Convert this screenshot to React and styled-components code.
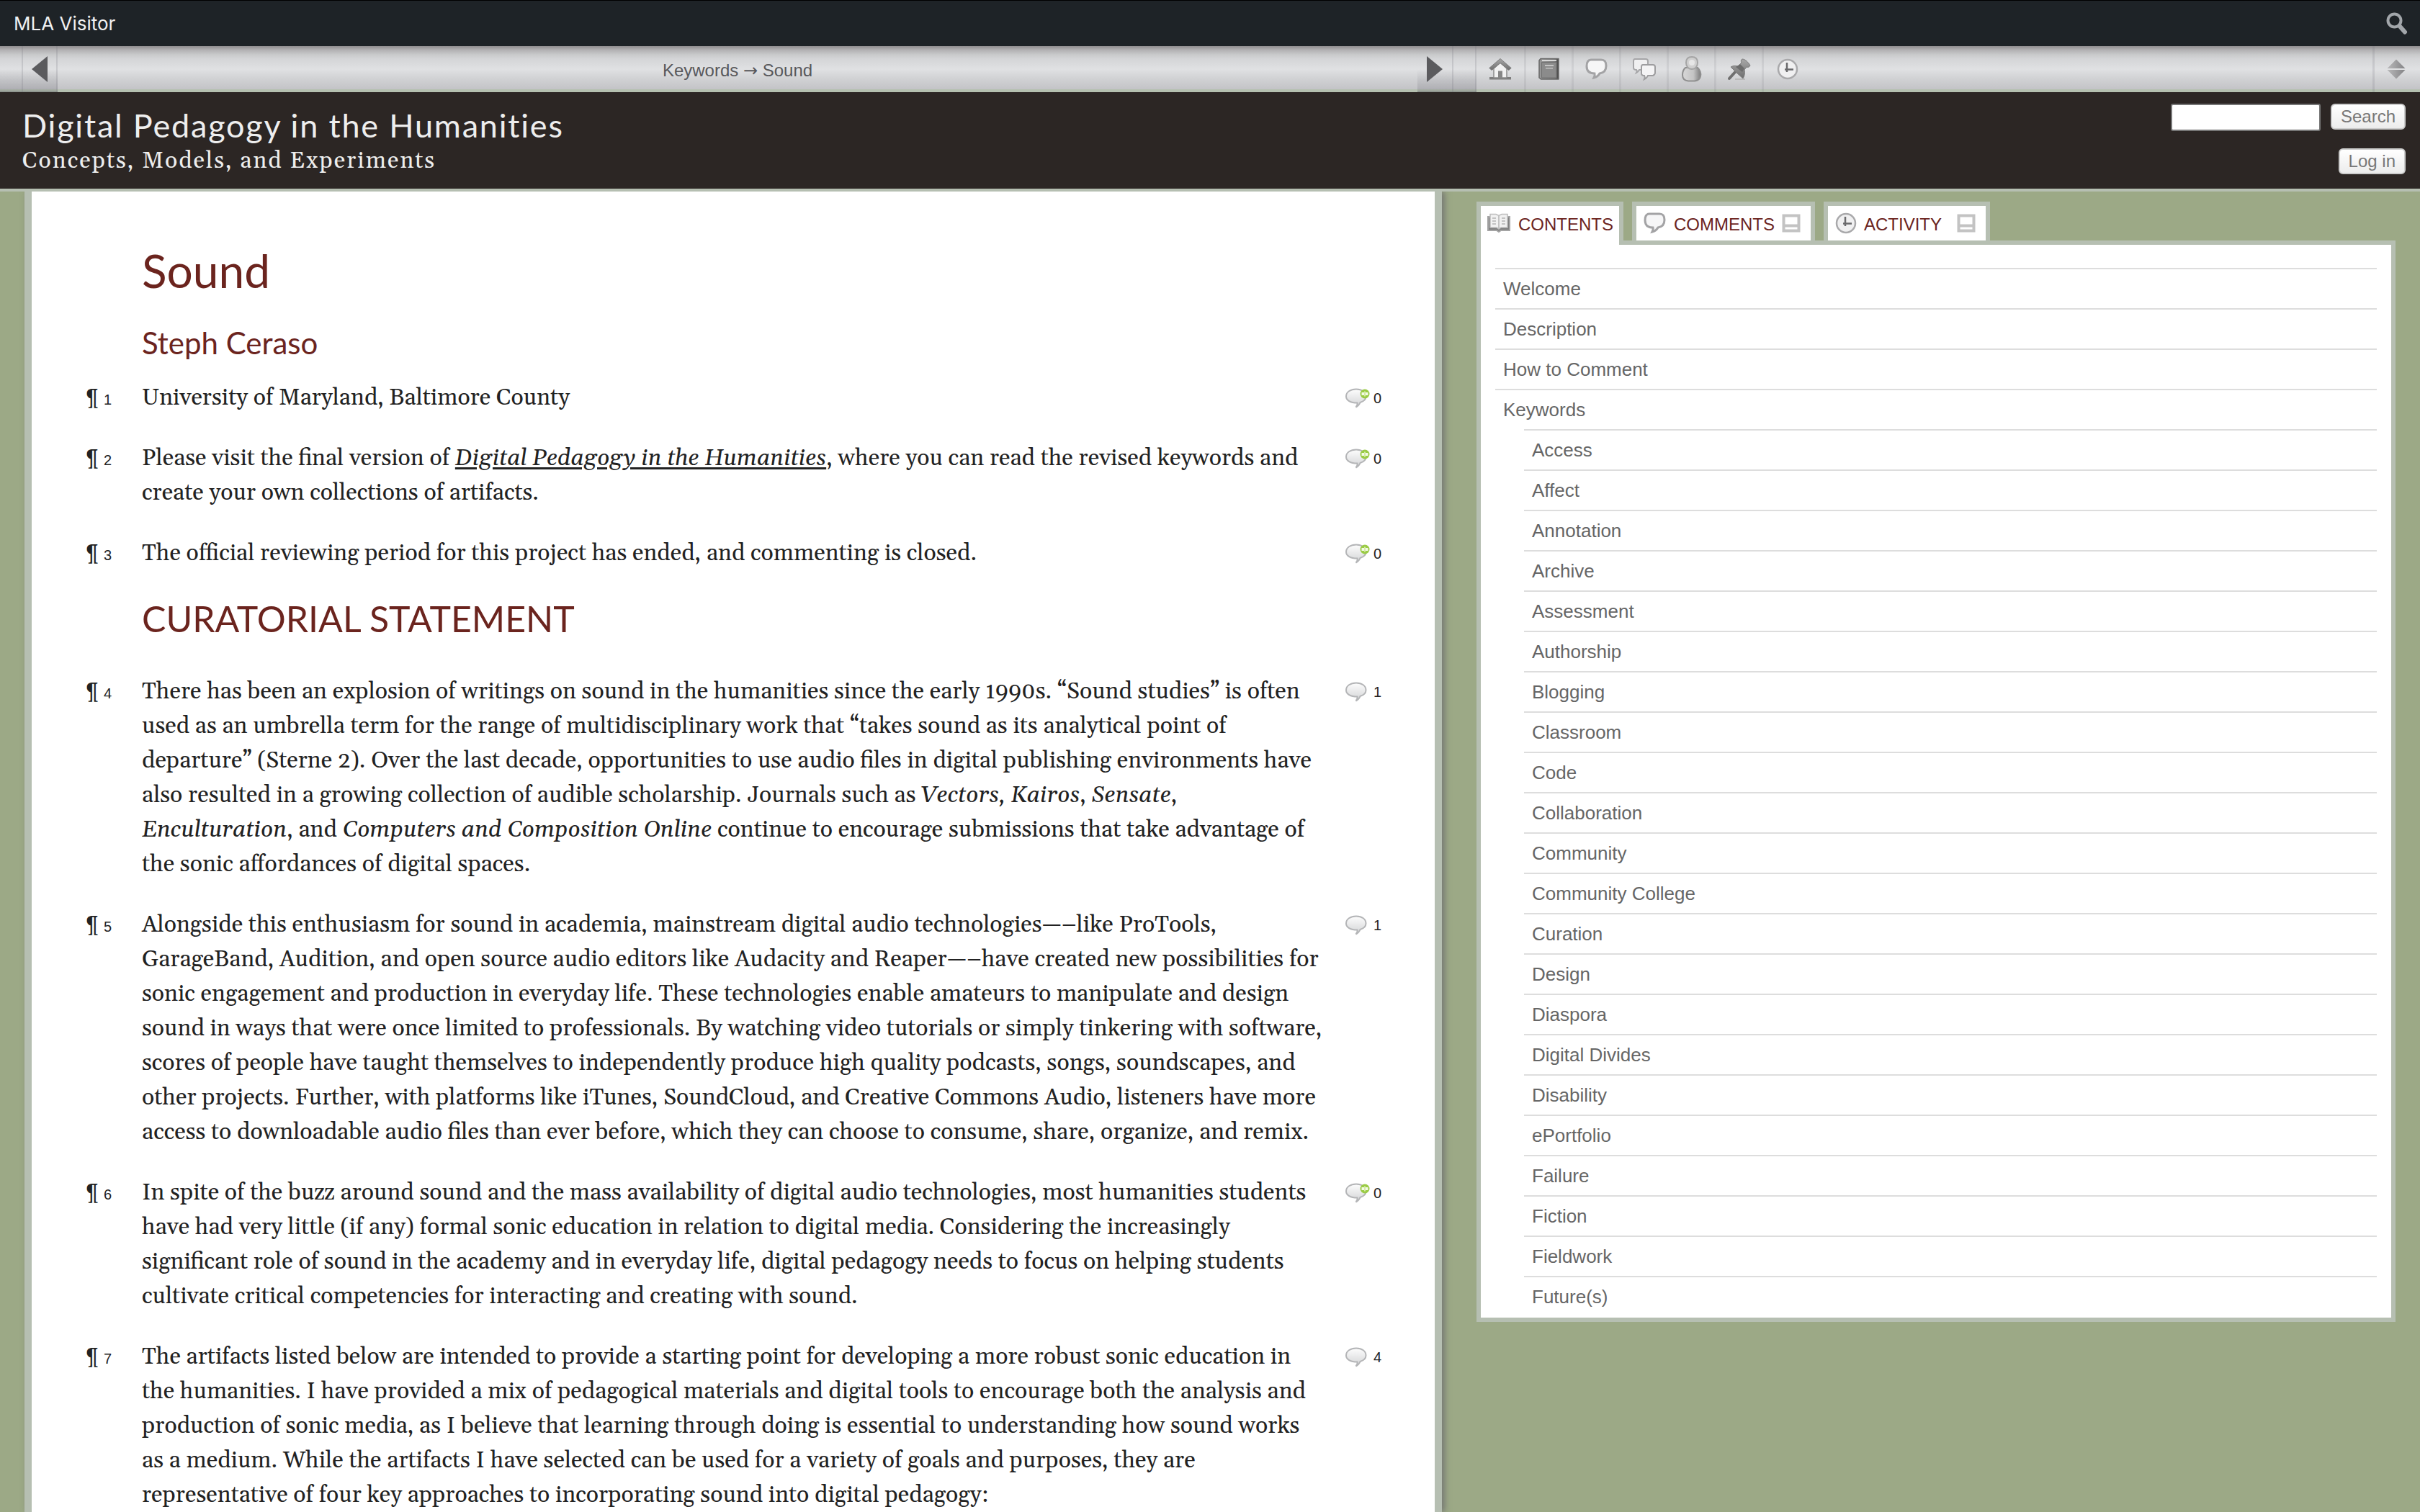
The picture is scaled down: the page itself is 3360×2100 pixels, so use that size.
import React from "react";
import styled, { createGlobalStyle, css } from "styled-components";

const sans = '"Liberation Sans", Helvetica, Arial, sans-serif';
const serif = 'Gelasio, Georgia, "Liberation Serif", serif';
const heading = 'Lato, "Open Sans", sans-serif';
const sage = "#b6bfb2";
const maroon = "#6b241e";

const GlobalStyle = createGlobalStyle`
  *, *::before, *::after { box-sizing: border-box; }
  body { margin: 0; background: #9ca986; font-family: ${sans}; color: #222; }
  button, input { font: inherit; }
  a { color: inherit; text-decoration: none; }
`;

const barGradient = css`
  background: linear-gradient(to bottom, #8f8d8f 0, #b0afb1 5px, #c9cacb 12px, #d4d5d7 18px, #e0e1e3 32px, #d2d3d5 44px, #c3c3c7 100%);
`;

const Shell = styled.div`
  display: flex;
  flex-direction: column;
  height: 100vh;
  overflow: hidden;
`;

const AdminBar = styled.div`
  display: flex;
  align-items: center;
  justify-content: space-between;
  height: 64px;
  flex: none;
  padding: 0 17px 0 19px;
  background: #1e2327;
  border-top: 1px solid #000;
  color: #f0f0f1;
  font: 26px/32px Inter, Roboto, sans-serif;
`;

const PlainButton = styled.button`
  display: flex;
  padding: 0;
  border: 0;
  background: none;
  color: inherit;
  cursor: pointer;
`;

const Toolbar = styled.nav`
  display: grid;
  grid-template-columns: minmax(0, 1fr) 1310px;
  height: 64px;
  flex: none;
  border-bottom: 4px solid #b5c0b0;
  ${barGradient}
`;

const Pager = styled.div`
  display: flex;
  align-items: stretch;
`;

const PagerCell = styled.span`
  display: flex;
  align-items: center;
  justify-content: center;
  width: ${(p) => p.$width}px;
  border-right: 2px solid rgba(120, 120, 128, 0.22);
  background: linear-gradient(to bottom, transparent 50%, rgba(110, 110, 118, 0.25) 96%, rgba(90, 90, 98, 0.5) 100%);
`;

const Crumb = styled.p`
  flex: 1;
  margin: 0;
  padding-top: 4px;
  text-align: center;
  color: #58585b;
  font-size: 24px;
  line-height: 60px;
`;

const Arrow = styled.span`
  font-family: "DejaVu Sans", sans-serif;
`;

const ToolRow = styled.div`
  display: flex;
`;

const ToolLink = styled.a`
  display: flex;
  align-items: center;
  justify-content: center;
  width: 66px;
  border-right: 3px solid rgba(120, 120, 128, 0.14);
  &:first-child { width: 69px; }
  &:nth-child(7) { border-right: 0; }
`;

const Minimize = styled(PlainButton)`
  align-items: center;
  justify-content: center;
  width: 66px;
  margin-left: auto;
  padding-right: 3px;
  border-left: 3px solid rgba(120, 120, 128, 0.2);
`;

const Masthead = styled.header`
  display: flex;
  justify-content: space-between;
  height: 138px;
  flex: none;
  padding: 16px 20px 0 31px;
  background: #2c2624;
  border-bottom: 4px solid ${sage};
  color: #eee;
`;

const SiteTitle = styled.h1`
  margin: 0;
  padding-top: 4px;
  font: 400 45px/52px ${heading};
  letter-spacing: 0.04em;
`;

const Tagline = styled.p`
  margin: 0;
  font: 32px/48px ${serif};
  letter-spacing: 2px;
`;

const Tools = styled.div`
  display: flex;
  flex-direction: column;
  align-items: flex-end;
  gap: 24px;
`;

const SearchForm = styled.form`
  display: flex;
  align-items: flex-start;
  gap: 14px;
`;

const SearchInput = styled.input`
  width: 208px;
  height: 38px;
  padding: 2px 6px;
  border: 2px solid #767676;
  border-radius: 3px;
  background: #fff;
  font-size: 24px;
`;

const SmallButton = styled.button`
  height: 36px;
  padding: 0 12px;
  border: 2px solid #ccc;
  border-radius: 6px;
  background: linear-gradient(#fff, #ececec);
  color: #777;
  font-size: 24px;
  line-height: 32px;
  cursor: pointer;
`;

const Columns = styled.div`
  display: grid;
  grid-template-columns: minmax(0, 1fr) 1358px;
  flex: 1;
  min-height: 0;
`;

const Article = styled.main`
  margin-left: 34px;
  padding: 72px 70px 0 76px;
  border: solid ${sage};
  border-width: 0 10px;
  background: #fff;
  box-shadow: 4px 0 8px rgba(112, 112, 112, 0.85);
  clip-path: inset(0 -20px 0 -20px);
  overflow: hidden;
`;

const PageTitle = styled.h2`
  margin: 0 0 36px 77px;
  color: ${maroon};
  font: 400 64px/76px ${heading};
`;

const Byline = styled.h3`
  margin: 0 0 27px 77px;
  color: ${maroon};
  font: 400 42px/52px ${heading};
`;

const SectionTitle = styled.h3`
  margin: 0 0 48px 77px;
  color: ${maroon};
  font: 400 50px/60px ${heading};
`;

const ParaRow = styled.section`
  display: grid;
  grid-template-columns: 77px minmax(0, 1fr) 54px;
  margin-bottom: 36px;
`;

const ParaMark = styled.a`
  display: flex;
  align-items: baseline;
  gap: 8px;
  height: 48px;
  font: 32px/48px ${serif};
`;

const Small = styled.span`
  font: 20px/48px ${sans};
`;

const Para = styled.p`
  margin: 0;
  padding-right: 28px;
  font: 32px/48px ${serif};
  a { text-decoration: underline; text-decoration-thickness: 3px; text-underline-offset: 3px; }
`;

const CommentLink = styled.a`
  display: flex;
  align-items: center;
  gap: 5px;
  height: 48px;
`;

const Sidebar = styled.aside`
  padding: 14px 34px 0 48px;
`;

const TabList = styled.div`
  display: flex;
  gap: 12px;
`;

const Tab = styled.button`
  display: flex;
  align-items: center;
  gap: 10px;
  height: ${(p) => (p.$active ? 60 : 54)}px;
  margin-bottom: ${(p) => (p.$active ? -6 : 0)}px;
  width: ${(p) => p.$width}px;
  padding: ${(p) => (p.$active ? "0 8px 6px 8px" : "0 14px 0 10px")};
  position: relative;
  border: 6px solid ${sage};
  border-bottom: 0;
  background: #fff;
  color: ${maroon};
  font-size: 24px;
  line-height: 44px;
  cursor: pointer;
`;

const TabLabel = styled.span`
  flex: 1;
  text-align: left;
  padding-top: 4px;
`;

const Panel = styled.div`
  padding: 32px 20px 2px;
  border: 6px solid ${sage};
  background: #fff;
`;

const Toc = styled.ul`
  margin: 0;
  padding: 0;
  list-style: none;
  font-size: 26px;
  line-height: 54px;
  color: #666;
  ul { padding-left: 40px; }
`;

const TocLink = styled.a`
  display: block;
  height: 56px;
  padding-left: 11px;
  border-top: 2px solid #ddd;
`;

const Triangle = ({ flip }) => (
  <svg width="24" height="36" viewBox="0 0 24 36" aria-hidden="true">
    <path d={flip ? "M1 0L23 18L1 36Z" : "M23 0L1 18L23 36Z"} fill="#5b5b5e" />
  </svg>
);

const DefsSvg = styled.svg`
  position: absolute;
`;

const IconDefs = () => (
  <DefsSvg width="0" height="0" aria-hidden="true">
    <defs>
      <linearGradient id="grey" x1="0" y1="0" x2="0" y2="1">
        <stop offset="0" stopColor="#a8a8a8" />
        <stop offset="1" stopColor="#6e6e6e" />
      </linearGradient>
      <linearGradient id="pale" x1="0" y1="0" x2="0" y2="1">
        <stop offset="0" stopColor="#fdfdfd" />
        <stop offset="1" stopColor="#d2d3d5" />
      </linearGradient>
      <linearGradient id="body" x1="0" y1="0" x2="1" y2="0">
        <stop offset="0" stopColor="#d8d8d8" />
        <stop offset="0.6" stopColor="#c4c4c4" />
        <stop offset="1" stopColor="#7c7c7c" />
      </linearGradient>
      <linearGradient id="cover" x1="0" y1="0" x2="1" y2="0">
        <stop offset="0" stopColor="#9a9a9a" />
        <stop offset="0.8" stopColor="#777" />
        <stop offset="1" stopColor="#444" />
      </linearGradient>
      <linearGradient id="gem" x1="0" y1="0" x2="1" y2="0">
        <stop offset="0" stopColor="#b9b9ba" />
        <stop offset="1" stopColor="#838385" />
      </linearGradient>
    </defs>
  </DefsSvg>
);

const HomeIcon = () => (
  <svg width="32" height="32" viewBox="0 0 32 32" aria-hidden="true">
    <path d="M1 27h30v3.500H1z" fill="#7d7d7d" />
    <path d="M7 15L16 7l9 8v13H7z" fill="#f2f2f2" stroke="#8b8b8b" strokeWidth="1.500" />
    <path d="M13 28v-9.500h6V28z" fill="#868686" />
    <path d="M16 1.500L.8 14.500l3.400 3L16 7.500l11.800 10 3.400-3z" fill="url(#grey)" stroke="#7c7c7c" strokeWidth="1" />
  </svg>
);

const BookIcon = () => (
  <svg width="32" height="32" viewBox="0 0 32 32" aria-hidden="true">
    <path d="M4 1.500h25V30H4.500L2 28V4z" fill="url(#cover)" stroke="#686868" strokeWidth="1.500" strokeLinejoin="round" />
    <path d="M6 3h20v2H6z" fill="#d8d8d8" />
    <path d="M5.500 6.500h20.500V28H5.500z" fill="#8b8b8b" stroke="#707070" />
    <path d="M10 10h12v2H10zM11 14h10v1.500H11z" fill="#c4c4c4" />
  </svg>
);

const BubbleShape = "M8 2h14c5 0 7 2.500 7 8.500S26 20 20 21c-1 2-4 5-8 6 1-2 1.500-4 1-6-7 0-11-3-11-10C2 5 3.500 2 8 2z";

const BubbleIcon = () => (
  <svg width="32" height="32" viewBox="0 0 32 32" aria-hidden="true">
    <path d={BubbleShape} transform="translate(0 1)" fill="#f6f6f7" stroke="#a3a3a5" strokeWidth="3" />
  </svg>
);

const BubblesIcon = () => (
  <svg width="34" height="34" viewBox="0 0 34 34" aria-hidden="true">
    <path d="M4 3h15c2 0 3 1 3 3v9c0 2-1 3-3 3h-9c-1 2-2 3-4 4 1-2 1-3 0-4-3 0-4-1-4-3V6c0-2 1-3 2-3z" fill="#f0f0f1" stroke="#a6a6a8" strokeWidth="2" />
    <path d="M15 11h14c2 0 3 1 3 3v8c0 2-1 3-3 4l-7 0c-1 3-3 4-5 5 1-2 1-3 0-5-3 0-4-1-4-3v-9c0-2 1-3 2-3z" fill="#f4f4f5" stroke="#9d9d9f" strokeWidth="2" />
  </svg>
);

const PersonIcon = () => (
  <svg width="30" height="36" viewBox="0 0 30 36" aria-hidden="true">
    <path d="M6 16h17c4 4 5 8 4 12-1 5-4 6-8 6.500H10C5 34 2 32 2 26c0-4 1-7 4-10z" fill="url(#body)" stroke="#8f8f8f" strokeWidth="2" />
    <path d="M15 1c5 0 8 3 8 8s-3 9-8 9-8-4-8-9 3-8 8-8z" fill="#cfcfcf" stroke="#a5a5a5" strokeWidth="2" />
    <circle cx="15" cy="9" r="4" fill="#e6e6e6" />
  </svg>
);

const PinIcon = () => (
  <svg width="32" height="32" viewBox="0 0 32 32" aria-hidden="true">
    <path d="M10 30h14" stroke="#b9b9b9" strokeWidth="2" />
    <path d="M12 18L2 29" stroke="#6f6f6f" strokeWidth="4" strokeLinecap="round" />
    <path d="M20 2c4 0 9 5 11 9-1 2-3 3-5 2l-3 4c1 5 0 9-2 12C15 24 9 18 4 13c3-2 7-2 10-1l5-5c-1-2-1-4 1-5z" fill="url(#grey)" stroke="#7b7b7b" />
    <path d="M11 13l6-4 6 6-3 5z" fill="#6c6c6c" />
  </svg>
);

const ClockIcon = () => (
  <svg width="30" height="30" viewBox="0 0 30 30" aria-hidden="true">
    <circle cx="15" cy="15" r="13" fill="#f0f0f1" stroke="#a9a9ab" strokeWidth="2.500" />
    <path d="M14 6v13M11 15.500h12" stroke="#6a6a6c" strokeWidth="2.500" fill="none" />
  </svg>
);

const MinimizeIcon = () => (
  <svg width="26" height="28" viewBox="0 0 26 28" aria-hidden="true">
    <path d="M13 .5L25.500 13H.5zM13 27.500L25.500 15H.5z" fill="url(#gem)" />
  </svg>
);

const MagnifierIcon = () => (
  <svg width="30" height="32" viewBox="0 0 30 32" aria-hidden="true">
    <circle cx="11.500" cy="11.500" r="9" fill="none" stroke="#a2a6aa" strokeWidth="4" />
    <path d="M18.500 19l7.500 8.500" stroke="#a2a6aa" strokeWidth="6" strokeLinecap="round" />
  </svg>
);

const OpenBookIcon = () => (
  <svg width="34" height="30" viewBox="0 0 34 30" aria-hidden="true">
    <path d="M2 6h30v19H20l-3 2-3-2H2z" fill="#808080" stroke="#a4a4a4" strokeWidth="2" />
    <path d="M5 2.500h8l4 2 4-2h8V21h-9l-3 2-3-2H5z" fill="#f1f1f1" stroke="#bdbdbd" strokeWidth="1.500" />
    <path d="M17 5v17M8 8h5M8 12h5M8 16h5M21 8h5M21 12h5M21 16h5" stroke="#b4b4b4" strokeWidth="1.500" />
  </svg>
);

const CollapseIcon = () => (
  <svg width="26" height="26" viewBox="0 0 26 26" aria-hidden="true">
    <path d="M2.500 2.500h21v21h-21zM2.500 16.500h21" fill="none" stroke="#c3c3c3" strokeWidth="4" />
  </svg>
);

const CommentIcon = ({ add }) => (
  <svg width="34" height="28" viewBox="0 0 34 28" aria-hidden="true">
    <path d="M15 1.500c8 0 13.500 4 13.500 10 0 4-3 7-8 8.500-1 3-3 5-6 6.500 2-2 2.500-4 2-6C7 20.500 1 17 1 11.500c0-6 6-10 14-10z" fill="url(#pale)" stroke="#b4b5b7" strokeWidth="2" />
    {add && (
      <>
        <circle cx="27" cy="8" r="6.500" fill="#9acb45" />
        <path d="M22.500 8h9" stroke="#f4fbe6" strokeWidth="4" />
        <path d="M27 4.500v7" stroke="#d5eba8" strokeWidth="2" />
      </>
    )}
  </svg>
);

const tools = [
  ["Home", HomeIcon],
  ["Title page", BookIcon],
  ["General comments", BubbleIcon],
  ["All comments", BubblesIcon],
  ["Members", PersonIcon],
  ["Blog", PinIcon],
  ["Activity", ClockIcon],
];

const intro = [
  { n: 1, comments: 0, text: "University of Maryland, Baltimore County" },
  {
    n: 2,
    comments: 0,
    text: (
      <>
        Please visit the final version of <a href="#final"><em>Digital Pedagogy in the Humanities</em></a>, where you can read the
        revised keywords and create your own collections of artifacts.
      </>
    ),
  },
  { n: 3, comments: 0, text: "The official reviewing period for this project has ended, and commenting is closed." },
];

const statement = [
  {
    n: 4,
    comments: 1,
    text: (
      <>
        There has been an explosion of writings on sound in the humanities since the early 1990s. “Sound studies” is often used as
        an umbrella term for the range of multidisciplinary work that “takes sound as its analytical point of departure” (Sterne
        2). Over the last decade, opportunities to use audio files in digital publishing environments have also resulted in a
        growing collection of audible scholarship. Journals such as <em>Vectors, Kairos</em>, <em>Sensate</em>,{" "}
        <em>Enculturation</em>, and <em>Computers and Composition Online</em> continue to encourage submissions that take
        advantage of the sonic affordances of digital spaces.
      </>
    ),
  },
  {
    n: 5,
    comments: 1,
    text:
      "Alongside this enthusiasm for sound in academia, mainstream digital audio technologies—–like ProTools, GarageBand, Audition, and open source audio editors like Audacity and Reaper—–have created new possibilities for sonic engagement and production in everyday life. These technologies enable amateurs to manipulate and design sound in ways that were once limited to professionals. By watching video tutorials or simply tinkering with software, scores of people have taught themselves to independently produce high quality podcasts, songs, soundscapes, and other projects. Further, with platforms like iTunes, SoundCloud, and Creative Commons Audio, listeners have more access to downloadable audio files than ever before, which they can choose to consume, share, organize, and remix.",
  },
  {
    n: 6,
    comments: 0,
    text:
      "In spite of the buzz around sound and the mass availability of digital audio technologies, most humanities students have had very little (if any) formal sonic education in relation to digital media. Considering the increasingly significant role of sound in the academy and in everyday life, digital pedagogy needs to focus on helping students cultivate critical competencies for interacting and creating with sound.",
  },
  {
    n: 7,
    comments: 4,
    text:
      "The artifacts listed below are intended to provide a starting point for developing a more robust sonic education in the humanities. I have provided a mix of pedagogical materials and digital tools to encourage both the analysis and production of sonic media, as I believe that learning through doing is essential to understanding how sound works as a medium. While the artifacts I have selected can be used for a variety of goals and purposes, they are representative of four key approaches to incorporating sound into digital pedagogy:",
  },
];

const sections = ["Welcome", "Description", "How to Comment"];
const keywords = [
  "Access", "Affect", "Annotation", "Archive", "Assessment", "Authorship", "Blogging", "Classroom", "Code", "Collaboration",
  "Community", "Community College", "Curation", "Design", "Diaspora", "Digital Divides", "Disability", "ePortfolio", "Failure",
  "Fiction", "Fieldwork", "Future(s)",
];

const Paragraph = ({ n, comments, text }) => (
  <ParaRow id={`para-${n}`}>
    <ParaMark href={`#para-${n}`}>
      ¶<Small>{n}</Small>
    </ParaMark>
    <Para>{text}</Para>
    <CommentLink href={`#comments-${n}`}>
      <CommentIcon add={comments === 0} />
      <Small>{comments}</Small>
    </CommentLink>
  </ParaRow>
);

export default function App() {
  return (
    <Shell>
      <GlobalStyle />
      <IconDefs />
      <AdminBar>
        <a href="#visitor">MLA Visitor</a>
        <PlainButton type="button" aria-label="Search"><MagnifierIcon /></PlainButton>
      </AdminBar>
      <Toolbar>
        <Pager>
          <PagerCell $width={32} />
          <PagerCell as="a" href="#prev" aria-label="Previous page" $width={48}><Triangle /></PagerCell>
          <Crumb>Keywords <Arrow>→</Arrow> Sound</Crumb>
          <PagerCell as="a" href="#next" aria-label="Next page" $width={50}><Triangle flip /></PagerCell>
          <PagerCell $width={32} />
        </Pager>
        <ToolRow>
          {tools.map(([label, Icon]) => (
            <ToolLink key={label} href="#tool" aria-label={label}><Icon /></ToolLink>
          ))}
          <Minimize type="button" aria-label="Minimise header"><MinimizeIcon /></Minimize>
        </ToolRow>
      </Toolbar>
      <Masthead>
        <div>
          <SiteTitle>Digital Pedagogy in the Humanities</SiteTitle>
          <Tagline>Concepts, Models, and Experiments</Tagline>
        </div>
        <Tools>
          <SearchForm onSubmit={(e) => e.preventDefault()}>
            <SearchInput type="text" aria-label="Search for" />
            <SmallButton type="submit">Search</SmallButton>
          </SearchForm>
          <SmallButton type="button">Log in</SmallButton>
        </Tools>
      </Masthead>
      <Columns>
        <Article>
          <PageTitle>Sound</PageTitle>
          <Byline>Steph Ceraso</Byline>
          {intro.map((p) => <Paragraph key={p.n} {...p} />)}
          <SectionTitle>CURATORIAL STATEMENT</SectionTitle>
          {statement.map((p) => <Paragraph key={p.n} {...p} />)}
        </Article>
        <Sidebar>
          <TabList role="tablist">
            <Tab type="button" role="tab" aria-selected="true" $active $width={204}>
              <OpenBookIcon />
              <TabLabel>CONTENTS</TabLabel>
            </Tab>
            <Tab type="button" role="tab" aria-selected="false" $width={254}>
              <BubbleIcon />
              <TabLabel>COMMENTS</TabLabel>
              <CollapseIcon />
            </Tab>
            <Tab type="button" role="tab" aria-selected="false" $width={231}>
              <ClockIcon />
              <TabLabel>ACTIVITY</TabLabel>
              <CollapseIcon />
            </Tab>
          </TabList>
          <Panel>
            <Toc>
              {sections.map((s) => <li key={s}><TocLink href="#toc">{s}</TocLink></li>)}
              <li>
                <TocLink href="#toc">Keywords</TocLink>
                <Toc>
                  {keywords.map((k) => <li key={k}><TocLink href="#toc">{k}</TocLink></li>)}
                </Toc>
              </li>
            </Toc>
          </Panel>
        </Sidebar>
      </Columns>
    </Shell>
  );
}
